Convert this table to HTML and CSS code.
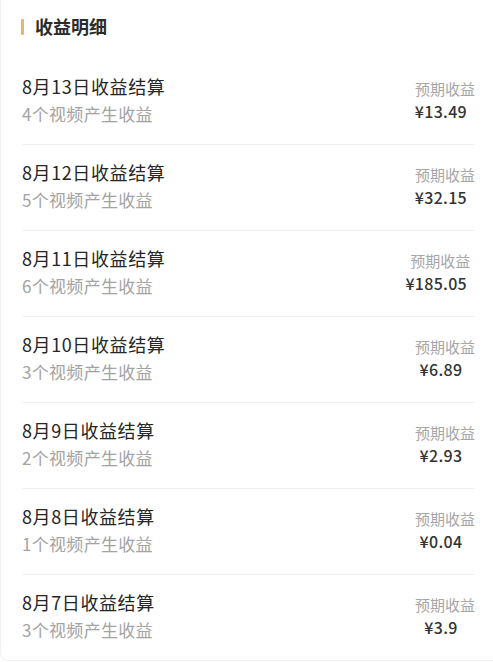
FILE: index.html
```html
<!DOCTYPE html>
<html lang="zh-CN">
<head>
<meta charset="utf-8">
<link rel="stylesheet" href="styles.css">
</head>
<body>
<div class="card">
  <div class="header"><span class="bar"></span><span class="header-title">收益明细</span></div>
  <div class="list">
    <div class="row"><div class="info"><div class="title">8月13日收益结算</div><div class="sub">4个视频产生收益</div></div><div class="earn"><div class="label">预期收益</div><div class="amount">¥13.49</div></div></div>
    <div class="row"><div class="info"><div class="title">8月12日收益结算</div><div class="sub">5个视频产生收益</div></div><div class="earn"><div class="label">预期收益</div><div class="amount">¥32.15</div></div></div>
    <div class="row"><div class="info"><div class="title">8月11日收益结算</div><div class="sub">6个视频产生收益</div></div><div class="earn"><div class="label">预期收益</div><div class="amount">¥185.05</div></div></div>
    <div class="row"><div class="info"><div class="title">8月10日收益结算</div><div class="sub">3个视频产生收益</div></div><div class="earn"><div class="label">预期收益</div><div class="amount">¥6.89</div></div></div>
    <div class="row"><div class="info"><div class="title">8月9日收益结算</div><div class="sub">2个视频产生收益</div></div><div class="earn"><div class="label">预期收益</div><div class="amount">¥2.93</div></div></div>
    <div class="row"><div class="info"><div class="title">8月8日收益结算</div><div class="sub">1个视频产生收益</div></div><div class="earn"><div class="label">预期收益</div><div class="amount">¥0.04</div></div></div>
    <div class="row"><div class="info"><div class="title">8月7日收益结算</div><div class="sub">3个视频产生收益</div></div><div class="earn"><div class="label">预期收益</div><div class="amount">¥3.9</div></div></div>
  </div>
</div>
</body>
</html>
```
FILE: styles.css
```css
html, body {
  margin: 0;
  padding: 0;
  background: #ffffff;
}
body {
  font-family: "Noto Sans CJK SC", "Noto Sans", sans-serif;
  color: #333333;
}
.card {
  height: 661px;
  border-left: 1px solid #f1f1f1;
  border-bottom: 1px solid #f1f1f1;
  border-bottom-left-radius: 8px;
  box-sizing: border-box;
}
.header {
  height: 59px;
  display: flex;
  align-items: center;
  padding-left: 20px;
  padding-bottom: 8px;
  box-sizing: border-box;
}
.bar {
  width: 3px;
  height: 16px;
  background: #ebb567;
  border-radius: 1px;
  margin-right: 11px;
  margin-top: 2px;
}
.header-title {
  font-size: 18px;
  font-weight: 700;
  color: #2b2b2b;
  line-height: 24px;
}
.list {
  margin: 0 18px 0 21px;
}
.row {
  display: flex;
  justify-content: space-between;
  align-items: center;
  padding: 13px 0 16px;
  border-bottom: 1px solid #f2f2f2;
}
.row:last-child {
  border-bottom: none;
}
.title {
  font-size: 18px;
  line-height: 28px;
  color: #262626;
  letter-spacing: 0.6px;
}
.sub {
  font-size: 17px;
  line-height: 28px;
  color: #a3a3a3;
  letter-spacing: 0.3px;
}
.earn {
  display: flex;
  flex-direction: column;
  align-items: center;
  padding-bottom: 1px;
}
.label {
  font-size: 15px;
  line-height: 23px;
  color: #a6a6a6;
}
.amount {
  font-size: 16px;
  line-height: 23px;
  font-weight: 500;
  color: #333333;
  margin-right: 8px;
  letter-spacing: 0.3px;
}
```
